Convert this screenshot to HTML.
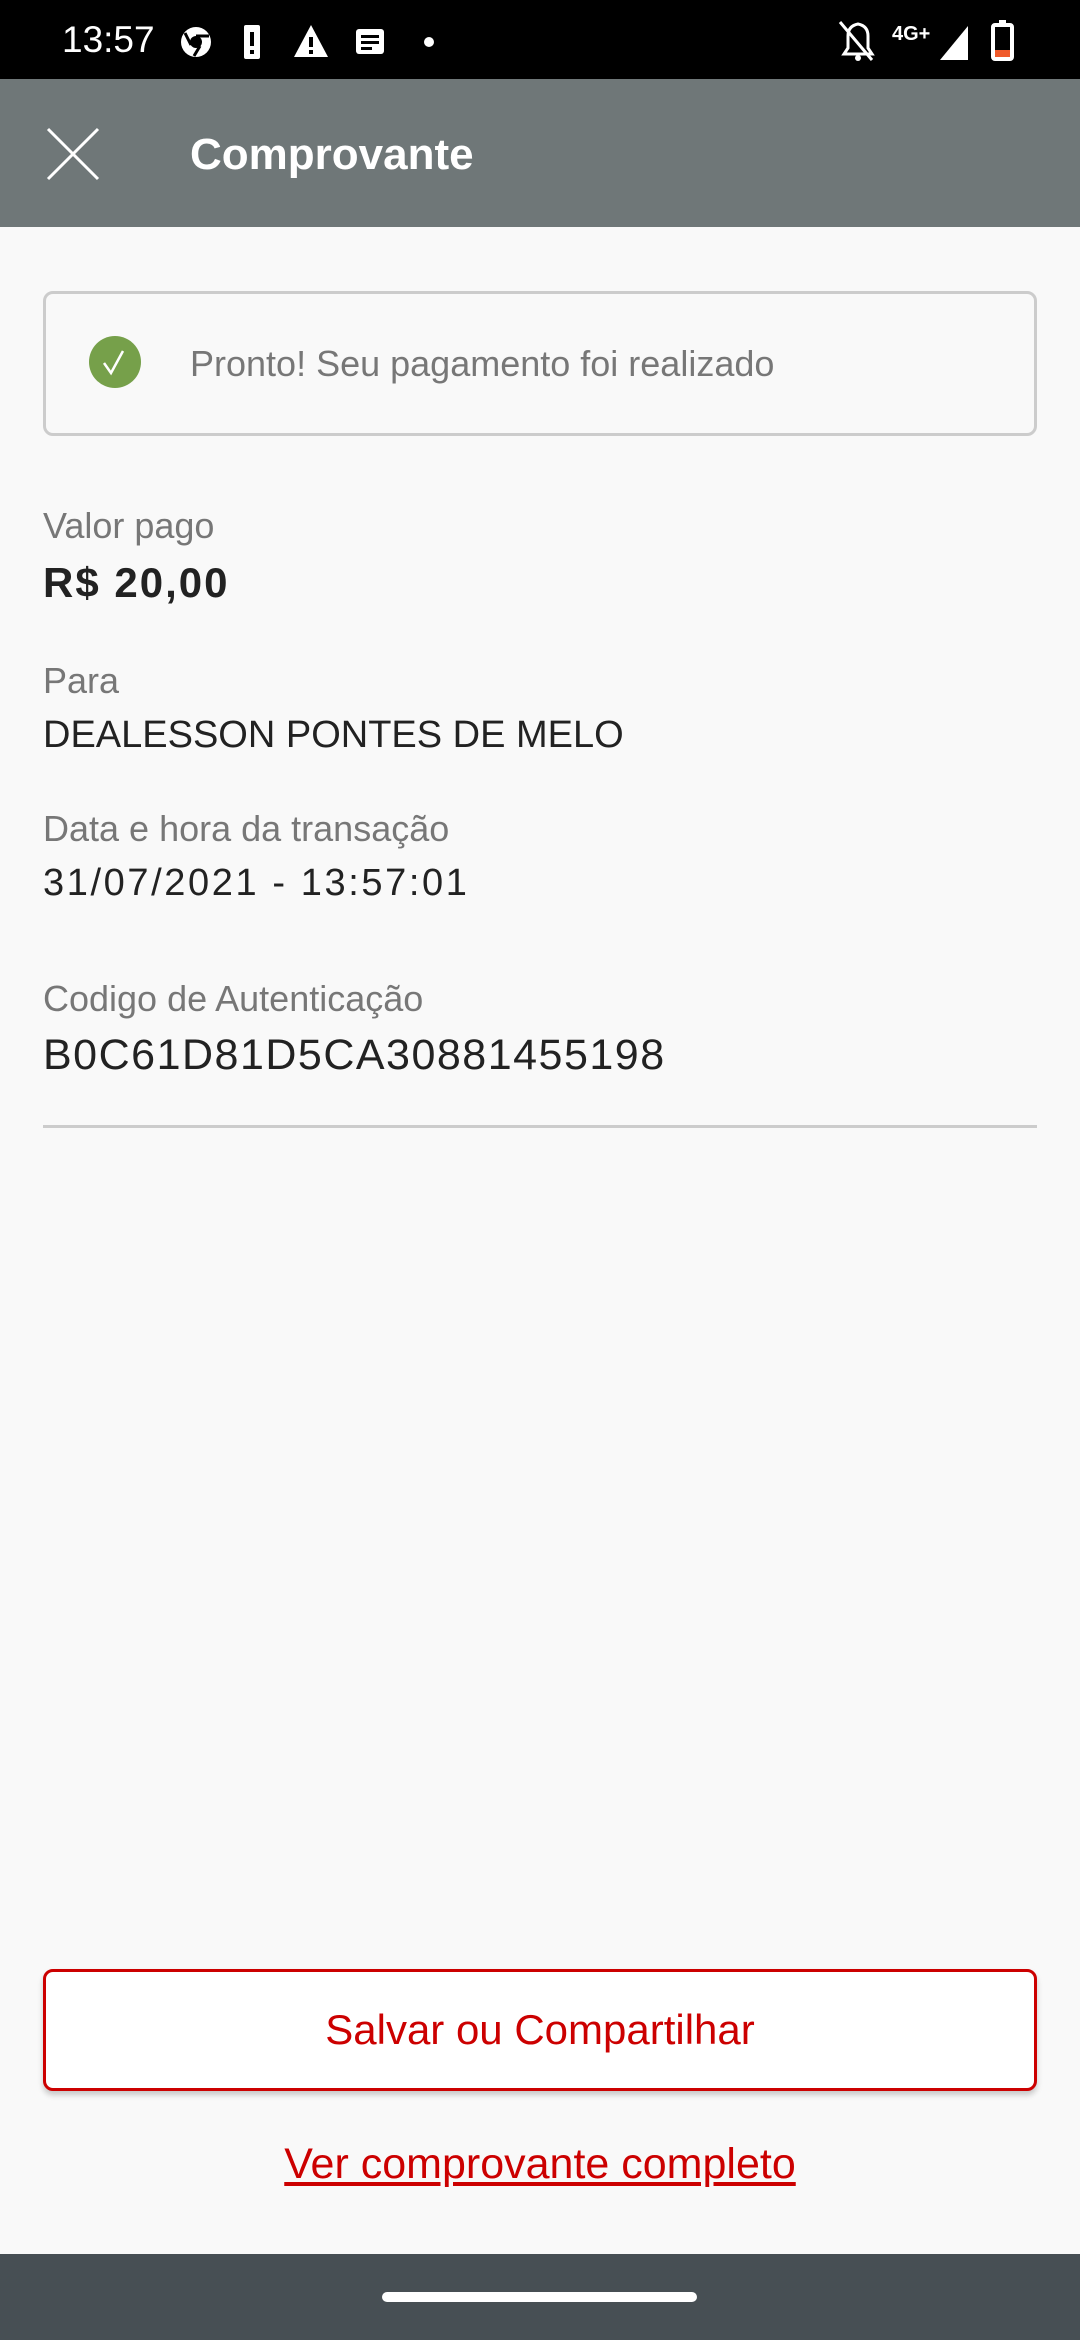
<!DOCTYPE html>
<html><head><meta charset="utf-8"><style>
*{margin:0;padding:0;box-sizing:border-box}
body{width:1080px;height:2340px;background:#f9f9f9;font-family:"Liberation Sans",sans-serif;position:relative;overflow:hidden}
.a{position:absolute;white-space:nowrap;line-height:1}
.lbl{color:#777;font-size:36px;left:43px}
.val{color:#222;font-size:38px;left:43px}
</style></head><body>
<div class="a" style="left:0;top:0;width:1080px;height:79px;background:#000"></div>
<div class="a" style="left:62px;top:21px;color:#fff;font-size:37px">13:57</div>
<svg class="a" style="left:176px;top:22px" width="270" height="40" viewBox="0 0 270 40">
<circle cx="20" cy="20" r="15" fill="#fff"/><circle cx="20" cy="20" r="6" fill="#000"/><path d="M20 14 L33 14 M15 23 L9 11 M24 24 L18 34" stroke="#000" stroke-width="3"/>
<rect x="68" y="3" width="16" height="34" rx="2" fill="#fff"/><rect x="74" y="10" width="4" height="14" fill="#000"/><rect x="74" y="28" width="4" height="4" fill="#000"/>
<path d="M135 3 L152 35 L118 35 Z" fill="#fff"/><rect x="133" y="15" width="4" height="10" fill="#000"/><rect x="133" y="28" width="4" height="4" fill="#000"/>
<rect x="180" y="7" width="28" height="25" rx="3" fill="#fff"/><rect x="185" y="13" width="18" height="3" fill="#000"/><rect x="185" y="19" width="18" height="3" fill="#000"/><rect x="185" y="25" width="11" height="3" fill="#000"/>
<circle cx="253" cy="20" r="5" fill="#fff"/></svg>
<svg class="a" style="left:836px;top:16px" width="190" height="48" viewBox="0 0 190 48">
<path d="M8 38 L36 38 L32 32 L32 20 Q32 10 22 8 Q12 10 12 20 L12 32 Z" fill="none" stroke="#fff" stroke-width="3"/><path d="M4 6 L36 44" stroke="#fff" stroke-width="3"/><circle cx="22" cy="42" r="3" fill="#fff"/>
<text x="56" y="24" fill="#fff" font-size="20" font-weight="bold" font-family="Liberation Sans">4G+</text>
<path d="M104 44 L132 44 L132 10 Z" fill="#fff"/>
<rect x="157" y="9" width="19" height="34" rx="2" fill="none" stroke="#fff" stroke-width="4"/><rect x="163" y="4" width="7" height="5" fill="#fff"/><rect x="159" y="34" width="15" height="7" fill="#f05a2a"/>
</svg>
<div class="a" style="left:0;top:79px;width:1080px;height:148px;background:#6f7778"></div>
<svg class="a" style="left:46px;top:127px" width="54" height="54" viewBox="0 0 54 54"><path d="M2 2 L52 52 M52 2 L2 52" stroke="#fff" stroke-width="3"/></svg>
<div class="a" style="left:190px;top:133px;color:#fff;font-size:44px;font-weight:bold">Comprovante</div>
<div class="a" style="left:43px;top:291px;width:994px;height:145px;border:3px solid #ccc;border-radius:10px"></div>
<svg class="a" style="left:89px;top:336px" width="52" height="52" viewBox="0 0 52 52"><circle cx="26" cy="26" r="26" fill="#76a04a"/><path d="M15 27 L22 37 L34 15" fill="none" stroke="#fff" stroke-width="2.5"/></svg>
<div class="a" style="left:190px;top:346px;color:#777;font-size:36px">Pronto! Seu pagamento foi realizado</div>
<div class="a lbl" style="top:508px">Valor pago</div>
<div class="a" style="left:43px;top:562px;color:#222;font-size:42px;font-weight:bold;letter-spacing:2px">R$ 20,00</div>
<div class="a lbl" style="top:663px">Para</div>
<div class="a val" style="top:716px">DEALESSON PONTES DE MELO</div>
<div class="a lbl" style="top:811px">Data e hora da transação</div>
<div class="a val" style="top:864px;letter-spacing:2.6px">31/07/2021 - 13:57:01</div>
<div class="a lbl" style="top:981px">Codigo de Autenticação</div>
<div class="a val" style="top:1034px;font-size:43px;letter-spacing:1.5px">B0C61D81D5CA30881455198</div>
<div class="a" style="left:43px;top:1125px;width:994px;height:3px;background:#ccc"></div>
<div class="a" style="left:43px;top:1969px;width:994px;height:122px;background:#fff;border:3px solid #cc0000;border-radius:10px;box-shadow:0 4px 6px rgba(0,0,0,.2);color:#cc0000;font-size:42px;display:flex;align-items:center;justify-content:center">Salvar ou Compartilhar</div>
<div class="a" style="left:0;width:1080px;top:2143px;text-align:center;color:#cc0000;font-size:43px;text-decoration:underline;text-underline-offset:4px">Ver comprovante completo</div>
<div class="a" style="left:0;top:2254px;width:1080px;height:86px;background:#474f54"></div>
<div class="a" style="left:382px;top:2292px;width:315px;height:10px;background:#fff;border-radius:5px"></div>
</body></html>
